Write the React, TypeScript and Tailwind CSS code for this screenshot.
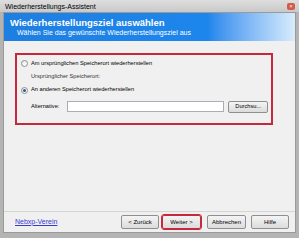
import React from "react";

function Radio({ checked }: { checked?: boolean }) {
  return (
    <span className="flex h-[7px] w-[7px] items-center justify-center rounded-full border border-[#8e8f8f] bg-gradient-to-br from-[#e8e8e8] to-white">
      {checked && <span className="h-[3px] w-[3px] rounded-full bg-[#2a5b8f]" />}
    </span>
  );
}

function Btn({ label, active, className = "" }: { label: string; active?: boolean; className?: string }) {
  return (
    <div
      className={`flex h-[14px] items-center justify-center rounded-[2px] border bg-gradient-to-b from-[#f4f4f4] to-[#dcdcdc] text-[6px] text-black ${
        active ? "border-[#c8283c] outline outline-1 outline-[#c8283c]" : "border-[#8e8f8f]"
      } ${className}`}
    >
      {label}
    </div>
  );
}

export default function App() {
  return (
    <div className="flex h-[238px] w-[299px] flex-col bg-[#b4b4b4] font-['Liberation_Sans',Arial,sans-serif]">
      {/* title bar */}
      <div className="flex h-[12px] items-center justify-between bg-gradient-to-b from-[#dedede] to-[#c9c9c9] pl-[5px] pr-[4px]">
        <span className="text-[7px] leading-none text-black">Wiederherstellungs-Assistent</span>
        <span className="flex h-[7px] w-[8px] items-center justify-center rounded-[2px] bg-[#d65a4a] text-[5px] leading-none text-white">
          ×
        </span>
      </div>

      <div className="mx-[3px] mb-[5px] flex flex-1 flex-col border border-[#9a9a9a] bg-[#f0f0f0]">
        {/* header */}
        <div className="flex h-[28px] flex-col justify-center gap-[2px] bg-gradient-to-r from-[#1e7fe2] via-[#1d86ec] via-70% to-[#d8ecfb] pl-[6px]">
          <span className="text-[9.5px] font-bold leading-none text-white">Wiederherstellungsziel auswählen</span>
          <span className="pl-[7px] text-[7px] leading-none text-white">Wählen Sie das gewünschte Wiederherstellungsziel aus</span>
        </div>

        {/* body */}
        <div className="flex-1 px-[11px] pt-[12px]">
          <div className="flex h-[72px] w-[258px] flex-col gap-[7px] border-2 border-[#c8283c] pl-[4px] pr-[3px] pt-[5px] text-[5.7px] leading-none text-black">
            <div className="flex items-center gap-[3px]">
              <Radio />
              <span>Am ursprünglichen Speicherort wiederherstellen</span>
            </div>
            <span className="pl-[10px] text-[#333]">Ursprünglicher Speicherort:</span>
            <div className="flex items-center gap-[3px]">
              <Radio checked />
              <span>An anderen Speicherort wiederherstellen</span>
            </div>
            <div className="flex items-center pl-[10px]">
              <span className="w-[36px]">Alternative:</span>
              <div className="h-[11px] w-[160px] border border-[#abadb3] bg-white" />
              <div className="ml-[4px] flex h-[12px] w-[40px] items-center justify-center rounded-[2px] border border-[#8e8f8f] bg-gradient-to-b from-[#f4f4f4] to-[#dcdcdc]">
                Durchsu...
              </div>
            </div>
          </div>
        </div>

        {/* footer */}
        <div className="flex h-[21px] items-center border-t border-[#d5d5d5] pl-[11px] pr-[6px]">
          <span className="flex-1 text-[7px] text-[#3a3ad0] underline">Nebxp-Verein</span>
          <div className="flex items-center">
            <Btn label="< Zurück" className="w-[38px]" />
            <Btn label="Weiter >" active className="ml-[3px] w-[39px]" />
            <Btn label="Abbrechen" className="ml-[6px] w-[39px]" />
            <Btn label="Hilfe" className="ml-[5px] w-[38px]" />
          </div>
        </div>
      </div>
    </div>
  );
}
